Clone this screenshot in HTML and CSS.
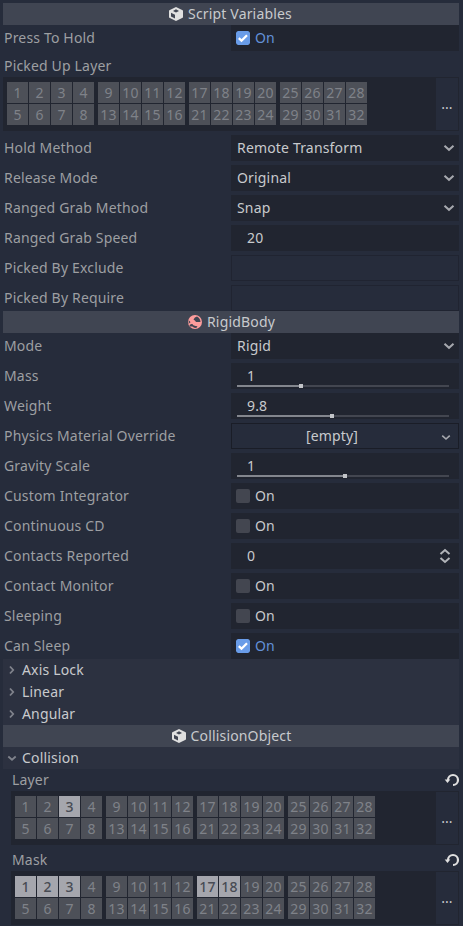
FILE: index.html
```html
<!DOCTYPE html>
<html lang="en">
<head>
<meta charset="utf-8">
<title>Inspector</title>
<link rel="stylesheet" href="styles.css">
</head>
<body>
<svg class="defs" aria-hidden="true">
  <symbol id="cube" viewBox="0 0 16 16">
    <path fill="#e0e0e0" fill-rule="evenodd" d="M8 .9 14.600 4.200Q15 4.400 15 4.900V11.100Q15 11.600 14.600 11.800L8 15.100 1.400 11.800Q1 11.600 1 11.100V4.900Q1 4.400 1.400 4.200ZM8 3.300 5 4.900 8 6.400 11 4.900ZM3 6.800V10.500L7 12.500V8.800Z"/>
  </symbol>
  <symbol id="body" viewBox="0 0 16 16">
    <circle cx="8" cy="8" r="7" fill="#fc9c9c"/>
    <path fill="#404552" d="M6.500 5.500Q7.500 3 10 2.500 13.300 4 13.500 8H9Q8.500 6.500 6.500 5.500ZM1.800 6.500Q3 7 3.500 8.300 2.200 9 1.700 10ZM2.500 11.300Q4 9.500 5.500 10 6 12 10.500 12.300L9.300 14Q7 14 5.300 12.500 4 12.300 3 12.500Z"/>
  </symbol>
  <symbol id="down" viewBox="0 0 12 12"><path d="M1.500 3.800 6 7.800 10.500 3.800" fill="none" stroke="#a6a8ae" stroke-width="2"/></symbol>
  <symbol id="fold" viewBox="0 0 12 12"><path d="M4 2.500 7.200 6 4 9.500" fill="none" stroke="#80838c" stroke-width="1.800"/></symbol>
  <symbol id="open" viewBox="0 0 12 12"><path d="M2.300 4.500 6 7.700 9.700 4.500" fill="none" stroke="#80838c" stroke-width="1.800"/></symbol>
  <symbol id="updown" viewBox="0 0 12 16"><path d="M1.500 6 6 2 10.500 6M1.500 10 6 14 10.500 10" fill="none" stroke="#b2b4b9" stroke-width="2"/></symbol>
  <symbol id="revert" viewBox="0 0 16 16"><path d="M4 8a5 5 0 1 1 5 5" fill="none" stroke="#e0e0e0" stroke-width="2.200"/><path fill="#e0e0e0" d="M.7 7.500H6.300L3.500 11Z"/></symbol>
  <symbol id="tick" viewBox="0 0 14 14"><rect width="14" height="14" rx="2" fill="#699ce8"/><path d="M2.800 7.200 5.500 9.700 11 4.200" fill="none" stroke="#fff" stroke-width="2.300"/></symbol>
</svg>
<main class="inspector">
  <h2 class="category first"><svg class="icon"><use href="#cube"/></svg><span>Script Variables</span></h2>
  <div class="rows">
    <div class="row"><span class="label">Press To Hold</span><div class="field check on"><svg class="box"><use href="#tick"/></svg><span>On</span></div></div>
    <div class="layer-prop"><div class="layer-name"><span>Picked Up Layer</span></div><div class="layers"><div class="bits" data-on=""></div><button class="more">...</button></div></div>
    <div class="row"><span class="label">Hold Method</span><div class="field select"><span>Remote Transform</span><svg class="arrow"><use href="#down"/></svg></div></div>
    <div class="row"><span class="label">Release Mode</span><div class="field select"><span>Original</span><svg class="arrow"><use href="#down"/></svg></div></div>
    <div class="row"><span class="label">Ranged Grab Method</span><div class="field select"><span>Snap</span><svg class="arrow"><use href="#down"/></svg></div></div>
    <div class="row"><span class="label">Ranged Grab Speed</span><div class="field number"><span>20</span></div></div>
    <div class="row"><span class="label">Picked By Exclude</span><div class="field blank"></div></div>
    <div class="row"><span class="label">Picked By Require</span><div class="field blank"></div></div>
  </div>
  <h2 class="category"><svg class="icon"><use href="#body"/></svg><span>RigidBody</span></h2>
  <div class="rows">
    <div class="row"><span class="label">Mode</span><div class="field select"><span>Rigid</span><svg class="arrow"><use href="#down"/></svg></div></div>
    <div class="row"><span class="label">Mass</span><div class="field number"><span>1</span><div class="track"><div class="fill" style="width:62px"></div><i class="knob"></i></div></div></div>
    <div class="row"><span class="label">Weight</span><div class="field number"><span>9.8</span><div class="track"><div class="fill" style="width:93px"></div><i class="knob"></i></div></div></div>
    <div class="row"><span class="label">Physics Material Override</span><div class="field resource"><span>[empty]</span><svg class="small-arrow"><use href="#down"/></svg></div></div>
    <div class="row"><span class="label">Gravity Scale</span><div class="field number"><span>1</span><div class="track"><div class="fill" style="width:106px"></div><i class="knob"></i></div></div></div>
    <div class="row"><span class="label">Custom Integrator</span><div class="field check"><i class="box"></i><span>On</span></div></div>
    <div class="row"><span class="label">Continuous CD</span><div class="field check"><i class="box"></i><span>On</span></div></div>
    <div class="row"><span class="label">Contacts Reported</span><div class="field number spin"><span>0</span><svg class="spinner"><use href="#updown"/></svg></div></div>
    <div class="row"><span class="label">Contact Monitor</span><div class="field check"><i class="box"></i><span>On</span></div></div>
    <div class="row"><span class="label">Sleeping</span><div class="field check"><i class="box"></i><span>On</span></div></div>
    <div class="row"><span class="label">Can Sleep</span><div class="field check on"><svg class="box"><use href="#tick"/></svg><span>On</span></div></div>
  </div>
  <div class="section"><svg class="fold"><use href="#fold"/></svg><span>Axis Lock</span></div>
  <div class="section"><svg class="fold"><use href="#fold"/></svg><span>Linear</span></div>
  <div class="section"><svg class="fold"><use href="#fold"/></svg><span>Angular</span></div>
  <h2 class="category"><svg class="icon"><use href="#cube"/></svg><span>CollisionObject</span></h2>
  <div class="section"><svg class="fold"><use href="#open"/></svg><span>Collision</span></div>
  <div class="rows nested">
    <div class="layer-prop"><div class="layer-name"><span>Layer</span><svg class="revert"><use href="#revert"/></svg></div><div class="layers"><div class="bits" data-on="3"></div><button class="more">...</button></div></div>
    <div class="layer-prop"><div class="layer-name"><span>Mask</span><svg class="revert"><use href="#revert"/></svg></div><div class="layers"><div class="bits" data-on="1,2,3,17,18"></div><button class="more">...</button></div></div>
  </div>
</main>
<script src="layers.js"></script>
</body>
</html>
```
FILE: styles.css
```css
* { box-sizing: border-box; }
body {
  margin: 0;
  height: 926px;
  overflow: hidden;
  background: #262c3b;
  color: #c8cacd;
  font: 14px/20px "Noto Sans", sans-serif;
  letter-spacing: 0.17px;
}
.defs { position: absolute; width: 0; height: 0; }
svg { display: block; flex: none; }
.inspector { width: 456px; margin: 3px 0 0 3px; display: flex; flex-direction: column; }
.category {
  height: 22px;
  margin: 0;
  display: flex;
  align-items: center;
  justify-content: center;
  gap: 4px;
  background: #404552;
  font-size: 14px;
  font-weight: 400;
}
.first { padding-right: 2px; }
.icon { width: 16px; height: 16px; }
.rows { display: flex; flex-direction: column; gap: 4px; }
.row { display: grid; grid-template-columns: 228px 228px; height: 26px; align-items: center; }
.label { padding-left: 1px; color: #9d9fa2; white-space: nowrap; }
.field { height: 26px; display: flex; align-items: center; background: #212530; }
.check { padding-left: 5px; gap: 5px; }
.box { width: 14px; height: 14px; border-radius: 2px; background: #434650; }
.on { color: #6391d8; }
.on .box { background: none; }
.select { justify-content: space-between; padding: 0 4px 0 6px; }
.arrow { width: 12px; height: 12px; }
.number { position: relative; padding-left: 16px; }
.blank { border: 1px solid #202431; background: none; }
.resource { border: 1px solid #1a1d27; background: none; position: relative; justify-content: center; }
.resource span { margin-right: 26px; }
.small-arrow { position: absolute; right: 7px; top: 8px; width: 10px; height: 11px; }
.track { position: absolute; left: 6px; right: 10px; bottom: 2px; height: 2px; display: flex; align-items: center; background: #434650; }
.fill { height: 2px; background: #83868d; }
.knob { width: 4px; height: 4px; flex: none; background: #c2c4c8; }
.spin { justify-content: space-between; padding-right: 8px; }
.spinner { width: 12px; height: 16px; }
.layer-name { display: flex; align-items: center; justify-content: space-between; height: 22px; padding-left: 1px; color: #9d9fa2; }
.revert { width: 16px; height: 16px; margin-right: -1px; }
.layers { display: flex; justify-content: space-between; height: 54px; padding: 1px 1px 1px 4px; background: #212530; }
.bits { display: flex; gap: 4px; padding-top: 4px; }
.group { display: grid; grid-template-columns: repeat(4, 21px); grid-auto-rows: 21px; gap: 1px; }
.bit { background: #4d5058; color: #7f8289; text-align: center; line-height: 21px; }
.bit.set { background: #a5a6ad; color: #484b54; font-weight: 500; }
.more { width: 22px; height: 52px; padding: 0; border: 0; background: #262c3b; color: inherit; font: inherit; }
.section { height: 22px; display: flex; align-items: center; gap: 4px; padding-left: 3px; background: #2c3140; }
.fold { width: 12px; height: 12px; }
.nested { padding-left: 8px; }
```
FILE: layers.js
```js
// Fill every layer grid with four groups of eight numbered bits.
document.querySelectorAll('.bits').forEach(function (grid) {
  var on = grid.dataset.on.split(',');
  for (var g = 0; g < 4; g++) {
    var group = document.createElement('div');
    group.className = 'group';
    for (var i = 1; i <= 8; i++) {
      var n = String(g * 8 + i);
      var bit = document.createElement('span');
      bit.className = on.indexOf(n) >= 0 ? 'bit set' : 'bit';
      bit.textContent = n;
      group.appendChild(bit);
    }
    grid.appendChild(group);
  }
});
```
